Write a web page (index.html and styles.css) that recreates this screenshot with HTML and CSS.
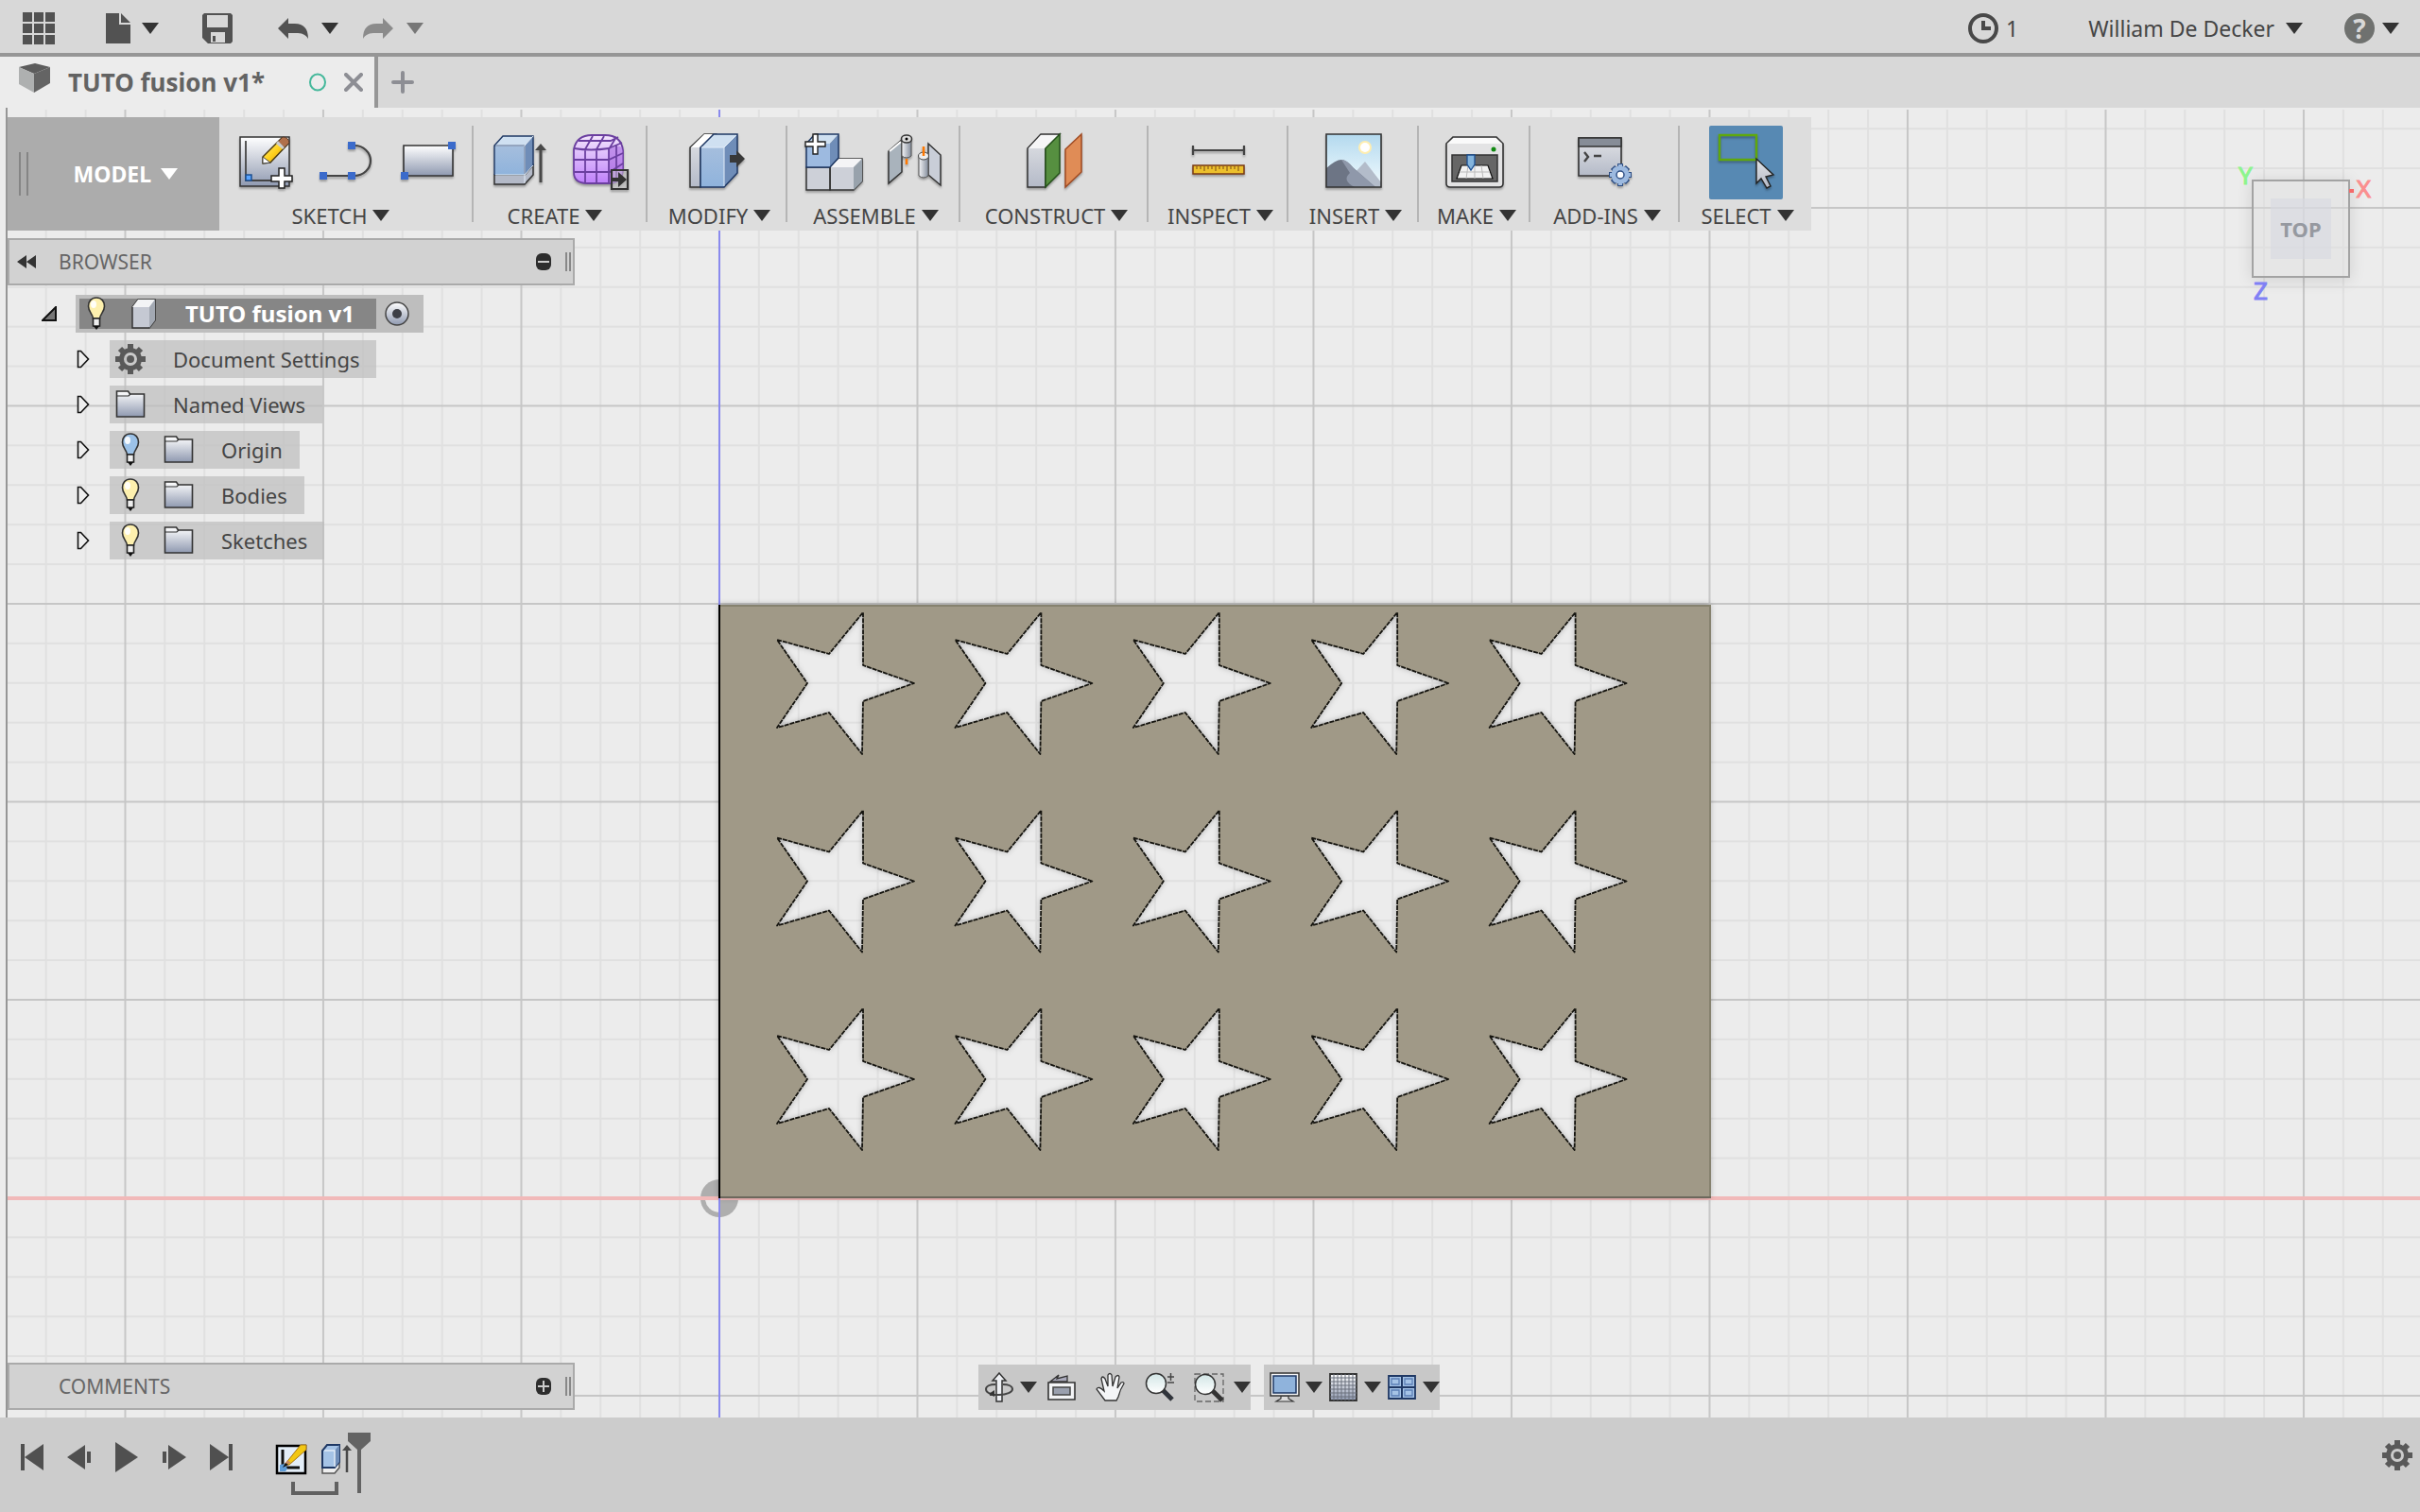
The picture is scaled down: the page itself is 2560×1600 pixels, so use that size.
FILE: index.html
```html
<!DOCTYPE html>
<html lang="en">
<head>
<meta charset="utf-8">
<title>TUTO fusion v1*</title>
<link rel="stylesheet" href="styles.css">
</head>
<body>
<svg class="defs" aria-hidden="true">
  <defs>
    <linearGradient id="steel" x1="0" y1="0" x2="0" y2="1"><stop offset="0" stop-color="#fff"/><stop offset="1" stop-color="#8f99b0"/></linearGradient>
    <linearGradient id="pale" x1="0" y1="0" x2="0" y2="1"><stop offset="0" stop-color="#e2e3e6"/><stop offset="1" stop-color="#b4bac8"/></linearGradient>
    <linearGradient id="pipe" x1="0" y1="0" x2="1" y2="0"><stop offset="0" stop-color="#f4f5f7"/><stop offset="1" stop-color="#848d9c"/></linearGradient>
    <linearGradient id="blue" x1="0" y1="0" x2="0" y2="1"><stop offset="0" stop-color="#a5bedd"/><stop offset="1" stop-color="#8fb3dc"/></linearGradient>
    <linearGradient id="purple" x1="0" y1="0" x2="0" y2="1"><stop offset="0" stop-color="#f3e6fc"/><stop offset="1" stop-color="#bf80fb"/></linearGradient>
    <linearGradient id="sky" x1="0" y1="0" x2="0" y2="1"><stop offset="0" stop-color="#b3d9ee"/><stop offset="1" stop-color="#f2fbff"/></linearGradient>
    <linearGradient id="glass" x1="0" y1="0" x2="0" y2="1"><stop offset="0" stop-color="#d2e6e6"/><stop offset="1" stop-color="#fff"/></linearGradient>
    <linearGradient id="pencil" x1="0" y1="0" x2="1" y2="1"><stop offset="0" stop-color="#fff2a0"/><stop offset=".5" stop-color="#ffd21e"/><stop offset="1" stop-color="#d98a00"/></linearGradient>
    <symbol id="gear" viewBox="0 0 32 32">
      <g stroke="#595959" fill="none">
        <circle cx="16" cy="16" r="9.500" stroke-width="5"/>
        <path stroke-width="6" d="M16 0v6M16 26v6M0 16h6M26 16h6M5 5l4 4M23 23l4 4M27 5l-4 4M9 23l-4 4"/>
      </g>
      <circle cx="16" cy="16" r="4" fill="#595959"/>
    </symbol>
    <symbol id="bulb" viewBox="0 0 20 36">
      <path d="M10 1C4.500 1 1.500 5 1.500 10c0 6 4.500 8 5 13h7c.5-5 5-7 5-13 0-5-3-9-8.500-9z" fill="currentColor" stroke="#333" stroke-width="1.600"/>
      <ellipse cx="7" cy="8" rx="3" ry="4" fill="#fff" opacity=".9"/>
      <path d="M6.500 23h7v8h-7z" fill="#eee" stroke="#222" stroke-width="1.600"/>
      <path d="M7 31h6l-3 4z" fill="#111"/>
    </symbol>
    <symbol id="folder" viewBox="0 0 32 32">
      <path d="M1.500 29V2h12l2 3h15v24z" fill="url(#steel)" stroke="#333" stroke-width="1.600"/>
      <path d="M2 7h12l2-2" fill="none" stroke="#333" stroke-width="1.200"/>
    </symbol>
    <symbol id="arrow-right" viewBox="0 0 14 20"><path d="M1.500 1.500v17h3l8-8.500-8-8.500z" fill="#eee" stroke="#111" stroke-width="1.600"/></symbol>
  </defs>
</svg>

<header class="topbar">
  <button class="tool-apps" aria-label="Data panel"><svg width="34" height="34"><path fill="#525252" d="M0 0h10v10H0zM12 0h10v10H12zM24 0h10v10H24zM0 12h10v10H0zM12 12h10v10H12zM24 12h10v10H24zM0 24h10v10H0zM12 24h10v10H12zM24 24h10v10H24z"/></svg></button>
  <button class="tool-file" aria-label="File"><svg width="26" height="32"><path fill="#525252" d="M0 0h14v12h12v20H0zM16 0l10 10H16z"/></svg><span class="caret"></span></button>
  <button class="tool-save" aria-label="Save"><svg width="32" height="32"><path fill="#525252" fill-rule="evenodd" d="M2 0h28l2 2v28l-2 2H6l-6-6V2zM5 2v13h22V2zM9 20v11h15V20zM11 24h3v6h-3z"/></svg></button>
  <button class="tool-undo" aria-label="Undo"><svg width="32" height="22"><path fill="#525252" d="M0 11L11 0v6h7c9 0 14 5 14 16-3-5-7-6-13-6h-8v6z"/></svg><span class="caret"></span></button>
  <button class="tool-redo" aria-label="Redo"><svg width="32" height="22"><path fill="#8b8b8b" d="M32 11L21 0v6h-7C5 6 0 11 0 22c3-5 7-6 13-6h8v6z"/></svg><span class="caret caret-dim"></span></button>
  <div class="account">
    <button class="jobs" aria-label="Job status"><svg width="32" height="32" fill="none" stroke="#484848"><circle cx="16" cy="16" r="14" stroke-width="4"/><path d="M16 8v8h8" stroke-width="4"/></svg><span>1</span></button>
    <button class="user">William De Decker<span class="caret"></span></button>
    <button class="help" aria-label="Help"><span class="help-mark">?</span><span class="caret"></span></button>
  </div>
</header>

<nav class="tabs">
  <div class="tab">
    <svg class="tab-cube" width="34" height="32"><path d="M0 4L17 0l16 4-17 7z" fill="#5c5c5c"/><path d="M0 4l16 7v20L0 22z" fill="#aeb0b0"/><path d="M33 4l-17 7v20l17-10z" fill="#646464"/></svg>
    <span class="tab-name">TUTO fusion v1*</span>
    <svg class="tab-state" width="18" height="20"><ellipse cx="9" cy="10" rx="8" ry="8.500" fill="none" stroke="#45b89b" stroke-width="2"/></svg>
    <button aria-label="Close tab"><svg width="20" height="20"><path d="M2 2l16 16M18 2L2 18" stroke="#8d8e94" stroke-width="4" stroke-linecap="round"/></svg></button>
  </div>
  <button class="tab-add" aria-label="New tab"><svg width="24" height="24"><path d="M12 2v20M2 12h20" stroke="#8d8e94" stroke-width="4" stroke-linecap="round"/></svg></button>
</nav>

<main class="viewport">
  <svg class="scene" aria-label="Plate with fifteen star cut-outs">
    <defs>
      <pattern id="grid" x="733" y="1131.500" width="209.500" height="209.500" patternUnits="userSpaceOnUse">
        <path d="M61.900 0v210M103.800 0v210M145.700 0v210M187.600 0v210M0 61.900h210M0 103.800h210M0 145.700h210M0 187.600h210" stroke="#e0e0e0" stroke-width="2"/>
        <path d="M20 0v210M0 20h210" stroke="#c6c6c6" stroke-width="2"/>
      </pattern>
      <path id="star" d="M959 607L905 588V532L869 576 814 561 846 607 814 654 869 638 904 682 905 626z"/>
      <g id="row"><use href="#star"/><use href="#star" x="188.400"/><use href="#star" x="376.800"/><use href="#star" x="565.200"/><use href="#star" x="753.600"/></g>
      <g id="stars"><use href="#row"/><use href="#row" y="209.500"/><use href="#row" y="419"/></g>
      <mask id="holes" maskUnits="userSpaceOnUse" x="740" y="500" width="1100" height="700"><rect x="740" y="500" width="1100" height="700" fill="#fff"/><use href="#stars" fill="#000"/></mask>
    </defs>
    <rect width="100%" height="100%" fill="url(#grid)"/>
    <circle cx="753" cy="1152" r="20" fill="#aeaeae"/>
    <path d="M753 1152v15a15 15 0 0 1-15-15z" fill="#ececec"/>
    <path d="M0 1152h8000" stroke="#f1b9b9" stroke-width="4"/>
    <path d="M753 0v8000" stroke="#8a8aee" stroke-width="2"/>
    <g class="plate"><rect x="753" y="524" width="1048" height="627" fill="#a09987" mask="url(#holes)"/></g>
    <use href="#stars" fill="none" stroke="#15140f" stroke-width="1.800" stroke-linejoin="round" stroke-dasharray="5 1"/>
    <path d="M753 525h1048" stroke="#86826f" stroke-width="2"/>
    <path d="M1801 524v627" stroke="#86826f" stroke-width="2"/>
    <path d="M753 1151h1049" stroke="#6c685c" stroke-width="2"/>
    <path d="M753 524v628" stroke="#000" stroke-width="2"/>
  </svg>

  <div class="ribbon">
    <button class="workspace"><span class="grip"></span>MODEL<span class="caret caret-light"></span></button>

    <section class="group g-sketch">
      <div class="tools">
        <button aria-label="Create sketch"><svg class="ico" viewBox="0 0 64 64">
          <path d="M5 5h52v52H5z" fill="url(#steel)" stroke="#333" stroke-width="1.500"/>
          <path d="M11 9v42h33" fill="none" stroke="#444" stroke-width="1.800"/>
          <path d="M11 45h6v6h-6z" fill="#59a4ff" stroke="#1d4f91" stroke-width="1.500"/>
          <path d="M29 26L49 6l7 6-19 20-8 1z" fill="url(#pencil)" stroke="#4a3a10" stroke-width="1.400"/>
          <path d="M45 10l5-5q6 0 7 6l-5 5z" fill="#b0704a" stroke="#5a3a28"/><path d="M43 12l7 6 2-2-7-7z" fill="#ccc"/>
          <path d="M29 26v7l8-1z" fill="#fff" stroke="#444"/>
          <path d="M46 38h6v8h8v6h-8v7h-6v-7h-8v-6h8z" fill="#fff" stroke="#222" stroke-width="1.500"/>
        </svg></button>
        <button aria-label="Line"><svg class="ico" viewBox="0 0 64 64">
          <path d="M6 46h34a17 16 0 0 0 0-32h-4" fill="none" stroke="#444" stroke-width="2.200"/>
          <path d="M3 42h8v8H3zM33 42h8v8h-8zM33 10h8v8h-8z" fill="#3b6bcb"/>
        </svg></button>
        <button aria-label="Rectangle"><svg class="ico" viewBox="0 0 64 64">
          <path d="M6 14h52v32H6z" fill="url(#steel)" stroke="#333" stroke-width="1.600"/>
          <path d="M3 42h8v8H3zM53 10h8v8h-8z" fill="#3b6bcb"/>
        </svg></button>
      </div>
      <button class="menu">SKETCH<span class="caret"></span></button>
    </section>

    <section class="group g-create">
      <div class="tools">
        <button aria-label="Extrude"><svg class="ico" viewBox="0 0 64 64">
          <path d="M5 45h32l9-10v10l-9 10H5z" fill="#b4bac8" stroke="#333" stroke-width="1.500"/>
          <path d="M5 14l9-10h32l-9 10z" fill="#cfe0f1"/><path d="M5 14h32v31H5z" fill="url(#blue)"/><path d="M37 14l9-10v31l-9 10z" fill="#6f8db8"/>
          <path d="M5 45V14L14 4h32v31M5 14h32v31" fill="none" stroke="#1f3864" stroke-width="1.400"/><path d="M6 45h31l9-10M37 14l9-10M6 14h31v40" fill="none" stroke="#e3edf8"/>
          <path d="M54 53V17" stroke="#484848" stroke-width="3"/><path d="M54 12l6 7H48z" fill="#484848"/>
        </svg></button>
        <button aria-label="Create form"><svg class="ico" viewBox="0 0 64 64">
          <path d="M3 18Q6 3 22 3h14q17 0 19 16v20q0 14-14 15H17Q3 54 3 42z" fill="url(#purple)" stroke="#6b3fa0" stroke-width="1.800"/>
          <path d="M40 18q14-8 15 2v18q0 14-14 16z" fill="#a86ae0" opacity=".6"/>
          <path d="M3 17q18 3 37 0l14-6M3 29h37l15-7M3 42h38l14-9M8 9h34l8-4M15 54V18l8-14M27 54V18l8-14M40 54V18l8-13M48 51V14" fill="none" stroke="#6b3fa0" stroke-width="1.800"/>
          <path d="M43 40h17v20H43z" fill="#ccc" fill-opacity=".5" stroke="#333" stroke-width="2.200"/><path d="M43 48h7v-6l9 8-9 8v-6h-7z" fill="#333"/>
        </svg></button>
      </div>
      <button class="menu">CREATE<span class="caret"></span></button>
    </section>

    <section class="group g-modify">
      <div class="tools">
        <button aria-label="Press pull"><svg class="ico" viewBox="0 0 64 64">
          <path d="M3 16L18 2h12L14 16v42H3z" fill="url(#pale)" stroke="#333" stroke-width="1.500"/><path d="M4 16L18 2h9L14 16z" fill="#fff"/>
          <path d="M14 16L28 2h25L39 16z" fill="#cfe0f1"/><path d="M14 16h25v42H14z" fill="url(#blue)"/><path d="M39 16L53 2v41L39 58z" fill="#6f8db8"/>
          <path d="M14 16L28 2h25v41L39 58H14z" fill="none" stroke="#1f3864" stroke-width="1.500"/><path d="M15 16h24v41M39 16L52 3" fill="none" stroke="#e3edf8"/>
          <path d="M45 24h7v-5l9 9-9 9v-5h-7z" fill="#383838"/>
        </svg></button>
      </div>
      <button class="menu">MODIFY<span class="caret"></span></button>
    </section>

    <section class="group g-assemble">
      <div class="tools">
        <button aria-label="New component"><svg class="ico" viewBox="0 0 64 64">
          <path d="M28 37l9-9h25v24l-9 9H28z" fill="#cdd0d8" stroke="#333" stroke-width="1.500"/><path d="M28 37l9-9h25l-9 9z" fill="#f4f4f6"/><path d="M53 37l9-9v24l-9 9z" fill="#98a2ac"/>
          <path d="M3 37h25v24H3z" fill="#cdd0d8" stroke="#333" stroke-width="1.500"/>
          <path d="M3 12l9-10h25l-9 10z" fill="#cfe0f1"/><path d="M3 12h25v25H3z" fill="#9dbae0"/><path d="M28 12l9-10v25l-9 10z" fill="#6f8db8"/><path d="M3 37V12l9-10h25v25l-9 10z" fill="none" stroke="#1f3864" stroke-width="1.500"/>
          <path d="M28 37v24" fill="none" stroke="#333"/>
          <path d="M10 2h5v8h8v5h-8v8h-5v-8H2v-5h8z" fill="#fff" stroke="#222" stroke-width="1.400"/>
        </svg></button>
        <button aria-label="Joint"><svg class="ico" viewBox="0 0 64 64">
          <path d="M4 20L18 8v34L4 54z" fill="#a9b3bc" stroke="#333" stroke-width="1.500"/><path d="M5 20L17 10" stroke="#fff" stroke-width="2"/>
          <path d="M18 7v18q5 4 10 0V7z" fill="url(#pipe)" stroke="#555"/><ellipse cx="23" cy="7" rx="5.500" ry="4" fill="#ddd" stroke="#333" stroke-width="1.500"/><circle cx="23" cy="7" r="1.500"/>
          <path d="M23 28v6" stroke="#ff7800" stroke-width="2.500"/>
          <path d="M46 12l13 12v32L46 45z" fill="#c9ced8" stroke="#333" stroke-width="1.500"/>
          <path d="M36 26v20q5 4 10 0V26z" fill="url(#pipe)" stroke="#555"/><ellipse cx="41" cy="25" rx="5.500" ry="4" fill="#eee" stroke="#444"/>
          <path d="M41 15v10" stroke="#ff7800" stroke-width="2.500"/>
        </svg></button>
      </div>
      <button class="menu">ASSEMBLE<span class="caret"></span></button>
    </section>

    <section class="group g-construct">
      <div class="tools">
        <button aria-label="Offset plane"><svg class="ico" viewBox="0 0 64 64">
          <path d="M3 17L17 2h20L22 17v41H3z" fill="url(#pale)" stroke="#333" stroke-width="1.500"/><path d="M4 17L17 3h19L22 17z" fill="#f6f6f7"/>
          <path d="M22 17L37 2v41L22 58z" fill="#568f40" stroke="#24501a" stroke-width="1.500"/>
          <path d="M43 18L60 2v40L43 58z" fill="#e08c56" stroke="#a04a22" stroke-width="1.500"/>
        </svg></button>
      </div>
      <button class="menu">CONSTRUCT<span class="caret"></span></button>
    </section>

    <section class="group g-inspect">
      <div class="tools">
        <button aria-label="Measure"><svg class="ico" viewBox="0 0 64 64">
          <path d="M5 19h54M5 14v10M59 14v10" stroke="#444" stroke-width="2.200"/>
          <path d="M5 35h54v9H5z" fill="#edc02c" stroke="#7a3a14" stroke-width="1.500"/>
          <path d="M9 36v3M13 36v3M17 36v5M21 36v3M25 36v3M29 36v5M33 36v3M37 36v3M41 36v5M45 36v3M49 36v3M53 36v5" stroke="#7a4a14" stroke-width="1"/>
        </svg></button>
      </div>
      <button class="menu">INSPECT<span class="caret"></span></button>
    </section>

    <section class="group g-insert">
      <div class="tools">
        <button aria-label="Insert image"><svg class="ico" viewBox="0 0 64 64">
          <path d="M3 2h58v56H3z" fill="url(#sky)"/>
          <circle cx="44" cy="16" r="7" fill="#ffeeb0"/><circle cx="44" cy="16" r="5" fill="#fff"/>
          <path d="M32 44l12-13 17 22v5H34z" fill="#b3bcca"/><path d="M3 38q10-9 16-9 5 0 13 9l23 20H3z" fill="#6d7585"/><path d="M19 29q6 0 12 8l24 21H33q-14-7-5-15z" fill="#8f98aa"/>
          <path d="M3 2h58v56H3z" fill="none" stroke="#333" stroke-width="1.600"/>
        </svg></button>
      </div>
      <button class="menu">INSERT<span class="caret"></span></button>
    </section>

    <section class="group g-make">
      <div class="tools">
        <button aria-label="3D print"><svg class="ico" viewBox="0 0 64 64">
          <path d="M2 12l7-7h46l7 7v42q0 4-4 4H6q-4 0-4-4z" fill="#e3e3e4" stroke="#333" stroke-width="1.600"/><path d="M3 12l7-6h44l7 6z" fill="#fafafa"/>
          <ellipse cx="52" cy="18" rx="2.500" ry="2.500" fill="#128a12"/>
          <path d="M8 24h48v28H8z" fill="#666" stroke="#333" stroke-width="1.500"/><path d="M18 35h28l5 14H13z" fill="#f2f2f2" stroke="#111" stroke-width="1.200"/><path d="M16 42h32M25 35l-2 14M32 35v14M39 35l2 14" stroke="#bbb"/>
          <path d="M24 24h8v10l-4 6-4-6z" fill="#84b4dc" stroke="#1d4f91" stroke-width="1.300"/>
        </svg></button>
      </div>
      <button class="menu">MAKE<span class="caret"></span></button>
    </section>

    <section class="group g-addins">
      <div class="tools">
        <button aria-label="Scripts and add-ins"><svg class="ico" viewBox="0 0 64 64">
          <path d="M4 6h45v40H4z" fill="url(#pale)" stroke="#333" stroke-width="1.600"/><path d="M4 6h45v9H4z" fill="#878d97" stroke="#333" stroke-width="1.600"/>
          <path d="M10 21l4 5-4 5M20 25h8" fill="none" stroke="#444" stroke-width="2.400"/>
          <g stroke="#2f4f84" fill="none"><path stroke-width="6" d="M48 33v24M36 45h24M40 37l16 16M56 37L40 53"/><circle cx="48" cy="45" r="9.500" fill="#9dbae0" stroke="none"/><path stroke="#9dbae0" stroke-width="4" d="M48 34v22M37 45h22M41 38l14 14M55 38L41 52"/><circle cx="48" cy="45" r="4" fill="#fff" stroke-width="1.500"/></g>
        </svg></button>
      </div>
      <button class="menu">ADD-INS<span class="caret"></span></button>
    </section>

    <section class="group g-select">
      <div class="tools">
        <button class="active" aria-label="Select"><svg class="ico" viewBox="0 0 64 64">
          <path d="M4 3h39v26H4z" fill="none" stroke="#5fa80c" stroke-width="2.500"/>
          <path d="M43 28v26l5-5 6 10 4-2-5-10 8-2z" fill="url(#pale)" stroke="#222" stroke-width="1.400"/>
        </svg></button>
      </div>
      <button class="menu">SELECT<span class="caret"></span></button>
    </section>
  </div>

  <aside class="browser">
    <header class="panel">
      <button aria-label="Collapse"><svg width="20" height="14"><path d="M0 7l10-7v14zM10 7l10-7v14z" fill="#333"/></svg></button>
      <h2>BROWSER</h2>
      <button aria-label="Minimise"><svg width="18" height="18"><rect x="1" y="0" width="16" height="18" rx="6" fill="#2d2d2d"/><path d="M3 9h12" stroke="#ccc" stroke-width="2"/></svg></button>
      <span class="panel-grip"></span>
    </header>
    <ul class="tree">
      <li class="root">
        <button aria-label="Collapse TUTO fusion v1"><svg width="16" height="16"><path d="M1 15L15 1v14z" fill="#777" stroke="#111" stroke-width="2"/></svg></button>
        <div class="chip">
          <span class="doc"><svg class="bulb on"><use href="#bulb"/></svg><svg width="26" height="32"><path d="M1 9l6-8h18v22l-6 8H1z" fill="#c5c9d3" stroke="#333" stroke-width="1.500"/><path d="M1 9l6-8h18l-6 8z" fill="#f3f4f6"/><path d="M19 9l6-8v22l-6 8z" fill="#a3a9b3"/></svg><b>TUTO fusion v1</b></span>
          <svg width="26" height="26"><circle cx="13" cy="13" r="12" fill="url(#steel)" stroke="#444" stroke-width="1.500"/><circle cx="13" cy="13" r="5" fill="#3d3f46"/></svg>
        </div>
      </li>
      <li><button aria-label="Expand Document Settings"><svg width="14" height="20"><use href="#arrow-right"/></svg></button><div class="chip"><svg class="node"><use href="#gear"/></svg><span>Document Settings</span></div></li>
      <li><button aria-label="Expand Named Views"><svg width="14" height="20"><use href="#arrow-right"/></svg></button><div class="chip"><svg class="node"><use href="#folder"/></svg><span>Named Views</span></div></li>
      <li><button aria-label="Expand Origin"><svg width="14" height="20"><use href="#arrow-right"/></svg></button><div class="chip"><svg class="bulb off"><use href="#bulb"/></svg><svg class="node"><use href="#folder"/></svg><span>Origin</span></div></li>
      <li><button aria-label="Expand Bodies"><svg width="14" height="20"><use href="#arrow-right"/></svg></button><div class="chip"><svg class="bulb on"><use href="#bulb"/></svg><svg class="node"><use href="#folder"/></svg><span>Bodies</span></div></li>
      <li><button aria-label="Expand Sketches"><svg width="14" height="20"><use href="#arrow-right"/></svg></button><div class="chip"><svg class="bulb on"><use href="#bulb"/></svg><svg class="node"><use href="#folder"/></svg><span>Sketches</span></div></li>
    </ul>
  </aside>

  <div class="viewcube">
    <button class="face">TOP</button>
    <span class="axis axis-y">Y</span><span class="axis axis-x">X</span><span class="axis axis-z">Z</span>
  </div>

  <div class="bottom">
    <section class="panel comments">
      <h2>COMMENTS</h2>
      <button aria-label="Add comment"><svg width="18" height="18"><rect x="1" y="0" width="16" height="18" rx="6" fill="#2d2d2d"/><path d="M3 9h12M9 3v12" stroke="#ccc" stroke-width="2"/></svg></button>
      <span class="panel-grip"></span>
    </section>
    <div class="navbars">
      <div class="navbar nav-view">
        <button class="slim" aria-label="Orbit"><svg width="32" height="32"><path d="M13 31V9H9l7-8 7 8h-4v22z" fill="#eef0f4" stroke="#333" stroke-width="1.500"/><path d="M20 13c6 0 10 2 10 5s-6 6-14 6H6M12 13c-6 0-10 2-10 5 0 2 2 4 5 5" fill="none" stroke="#444" stroke-width="2"/><path d="M5 23l6-4v7z" fill="#333"/></svg></button>
        <button class="drop" aria-label="Orbit options"><span class="caret"></span></button>
        <button aria-label="Look at"><svg width="32" height="32"><path d="M4 10l9-7-2 4 11-3v6z" fill="#aab" stroke="#333" stroke-width="1.300"/><path d="M2 11h28v18H2z" fill="#f3f4f6" stroke="#333" stroke-width="1.600"/><path d="M7 16h18v8H7z" fill="#9aa0ae" stroke="#444" stroke-width="1.500"/></svg></button>
        <button aria-label="Pan"><svg width="32" height="32"><path d="M10 30C7 26 4 22 1 18q2-4 8 2L6 7q1-4 4 0l3 8V3q2-3 4 0l1 12 3-10q3-3 4 0l-2 12 4-6q3-1 3 1-4 6-6 14l-2 4z" fill="#f4f5f7" stroke="#333" stroke-width="1.300"/></svg></button>
        <button aria-label="Zoom"><svg width="32" height="32"><path d="M19 19l10 10" stroke="#30343b" stroke-width="5"/><circle cx="12" cy="12" r="10.500" fill="url(#glass)" stroke="#333" stroke-width="1.500"/><path d="M24 5h7M27.500 1v8M24 11h7" stroke="#444" stroke-width="1.500"/></svg></button>
        <button aria-label="Fit"><svg width="32" height="32"><path d="M1 2h30v29H1z" fill="none" stroke="#666" stroke-width="1.300" stroke-dasharray="6 3"/><path d="M20 20l10 10" stroke="#333" stroke-width="5"/><circle cx="12" cy="13" r="10.500" fill="url(#glass)" stroke="#333" stroke-width="1.500"/></svg></button>
        <button class="drop" aria-label="Zoom options"><span class="caret"></span></button>
      </div>
      <div class="navbar nav-display">
        <button class="slim" aria-label="Display settings"><svg width="32" height="32"><path d="M12 25h8v3l5 3H7l5-3z" fill="#ddd" stroke="#333" stroke-width="1.200"/><path d="M1 1h30v24H1z" fill="#f3f4f6" stroke="#333" stroke-width="1.500"/><path d="M4 4h24v18H4z" fill="#8fb3dc" stroke="#1f3864" stroke-width="1.500"/></svg></button>
        <button class="drop" aria-label="Display options"><span class="caret"></span></button>
        <button class="slim" aria-label="Grid and snaps"><svg width="32" height="32"><path d="M2 2h28v28H2z" fill="url(#steel)" stroke="#333" stroke-width="1.800"/><path d="M6 2v28M10 2v28M14 2v28M18 2v28M22 2v28M26 2v28M2 6h28M2 10h28M2 14h28M2 18h28M2 22h28M2 26h28" stroke="#6a707d" stroke-width="1"/></svg></button>
        <button class="drop" aria-label="Grid options"><span class="caret"></span></button>
        <button class="slim" aria-label="Viewports"><svg width="32" height="32"><path d="M2 4h28v24H2z" fill="#a5c3e6" stroke="#1f3864" stroke-width="1.800"/><path d="M16 4v24M2 16h28" stroke="#1f3864" stroke-width="2"/><path d="M5 7h8v6H5zM19 7h8v6h-8zM5 19h8v6H5zM19 19h8v6h-8z" fill="none" stroke="#5b7fb5" stroke-width="1.300"/></svg></button>
        <button class="drop" aria-label="Viewport options"><span class="caret"></span></button>
      </div>
    </div>
  </div>
</main>

<footer class="timeline">
  <div class="playback">
    <button aria-label="Go to start"><svg width="26" height="34"><path d="M1 3h4v28H1zM5 17L25 3v28z" fill="#505050"/></svg></button>
    <button aria-label="Step back"><svg width="26" height="34"><path d="M0 17L19 4v26zM21 11h4v12h-4z" fill="#505050"/></svg></button>
    <button aria-label="Play"><svg width="26" height="34"><path d="M1 1l24 16L1 33z" fill="#505050"/></svg></button>
    <button aria-label="Step forward"><svg width="26" height="34"><path d="M26 17L7 4v26zM1 11h4v12H1z" fill="#505050"/></svg></button>
    <button aria-label="Go to end"><svg width="26" height="34"><path d="M21 3h4v28h-4zM21 17L1 3v28z" fill="#505050"/></svg></button>
  </div>
  <div class="features">
    <button aria-label="Sketch1"><svg width="34" height="34"><path d="M2 3h30v29H2z" fill="#e4eef8" stroke="#000" stroke-width="2.500"/><path d="M8 7v19h18" fill="none" stroke="#111" stroke-width="3"/><path d="M5 30v-7l5-1 3 5-2 3z" fill="#5d9bd6"/><path d="M10 23L27 2h6v5L15 23z" fill="#f2c713" stroke="#a87410"/><path d="M10 23l3-5 4 3z" fill="#c98a60"/><path d="M8 26l3-5 3 2z" fill="#111"/></svg></button>
    <button aria-label="Extrude1"><svg width="34" height="34"><path d="M2 25h13l5-6v7l-5 6H2z" fill="#eee" stroke="#555" stroke-width="1.500"/><path d="M2 26V8l5-6h13v18l-5 6z" fill="#a5c3e6" stroke="#1f3864" stroke-width="2"/><path d="M15 8l5-6v18l-5 6z" fill="#6f8db8"/><path d="M4 8h11v17" fill="none" stroke="#e3edf8" stroke-width="1.500"/><path d="M28 31V5" stroke="#484848" stroke-width="2.500"/><path d="M28 2l5 6H23z" fill="#484848"/></svg></button>
    <svg class="span" width="50" height="14"><path d="M2 0v12h46V0" fill="none" stroke="#606060" stroke-width="4"/></svg>
    <svg class="marker" width="24" height="64"><path d="M0 0h24v9l-10 9v46h-4V18L0 9z" fill="#636363"/></svg>
  </div>
  <button class="settings" aria-label="Timeline settings"><svg width="32" height="32"><use href="#gear"/></svg></button>
</footer>
</body>
</html>
```
FILE: styles.css
```css
* { box-sizing: border-box; }

body {
  margin: 0;
  min-height: 100vh;
  display: flex;
  flex-direction: column;
  background: #ececec;
  color: #454545;
  font: 22px/30px "Noto Sans", sans-serif;
}

button {
  display: flex;
  align-items: center;
  justify-content: center;
  flex: none;
  margin: 0;
  padding: 0;
  border: 0;
  background: none;
  color: inherit;
  font: inherit;
  white-space: nowrap;
}

svg { display: block; flex: none; }
h2 { margin: 0; font-size: 21px; font-weight: 400; }
.defs { position: absolute; width: 0; height: 0; }

.caret {
  flex: none;
  border: solid transparent;
  border-width: 12px 9px 0;
  border-top-color: #333;
}
.caret-dim { border-top-color: #777; }
.caret-light { border-top-color: #fff; }

/* Application bar */
.topbar {
  display: flex;
  align-items: center;
  height: 60px;
  padding: 0 22px 0 24px;
  background: #d8d8d8;
  border-bottom: 4px solid #969696;
}
.topbar button { gap: 12px; height: 56px; padding-top: 4px; }
.tool-file { margin-left: 54px; }
.tool-save { margin-left: 46px; }
.tool-undo { margin-left: 48px; }
.tool-redo { margin-left: 26px; }
.topbar .tool-undo, .topbar .tool-redo { gap: 14px; }
.account { display: flex; margin-left: auto; }
.topbar .jobs { gap: 8px; margin-right: 74px; font-size: 23px; }
.topbar .user { margin-right: 44px; font-size: 23px; }
.topbar .help { gap: 8px; }
.help-mark {
  width: 32px;
  height: 32px;
  border-radius: 50%;
  background: #6f716f;
  color: #d8d8d8;
  font-size: 28px;
  font-weight: 700;
  line-height: 32px;
}

/* Document tabs */
.tabs {
  display: flex;
  height: 54px;
  background: #d8d8d8;
}
.tab {
  display: flex;
  align-items: center;
  width: 400px;
  padding: 0 12px 0 20px;
  background: #ececec;
  border-right: 4px solid #969696;
}
.tab-cube { margin-bottom: 8px; }
.tab-name {
  margin-left: 18px;
  color: #636363;
  font-size: 26px;
  font-weight: 700;
  white-space: nowrap;
}
.tab-state { margin: 0 19px 0 auto; }
.tab-add { width: 52px; }

/* Drawing area */
.viewport {
  position: relative;
  flex: 1;
  display: flex;
  flex-direction: column;
  align-items: flex-start;
  padding-top: 10px;
  border-left: 2px solid #969696;
  margin-left: 6px;
}
.scene {
  position: absolute;
  top: 2px;
  left: 0;
  width: 100%;
  height: calc(100% - 2px);
}
.plate { filter: drop-shadow(0 0 3px rgba(0, 0, 0, .3)); }

/* Ribbon */
.ribbon {
  position: relative;
  display: flex;
  height: 120px;
  background: #ddd;
}
.workspace {
  width: 224px;
  gap: 10px;
  padding-right: 44px;
  background: #acacac;
  color: #fff;
}
.ribbon .workspace { font-size: 23px; font-weight: 700; }
.grip {
  width: 10px;
  height: 46px;
  margin: 0 auto 0 12px;
  border: solid #858585;
  border-width: 0 2px;
}
.group {
  display: flex;
  flex-direction: column;
  align-items: center;
  padding-top: 9px;
  background: linear-gradient(#b5b5b5, #b5b5b5) no-repeat right 9px / 2px 102px;
}
.group:last-child { background: none; }
.tools { display: flex; gap: 8px; }
.tools button { width: 78px; height: 78px; padding-bottom: 1px; }
.tools .active { background: #5789b3; border-radius: 2px; }
.ico {
  width: 64px;
  height: 64px;
  overflow: visible;
  filter: drop-shadow(0 2px 1px rgba(0, 0, 0, .3));
}
.menu { gap: 6px; height: 33px; padding-left: 4px; }
.g-sketch .menu, .g-create .menu { padding: 0 12px 0 0; }
.g-sketch { width: 269px; }
.g-create { width: 184px; }
.g-modify { width: 148px; }
.g-assemble { width: 183px; }
.g-construct { width: 199px; }
.g-inspect { width: 148px; }
.g-insert { width: 138px; }
.g-make { width: 118px; }
.g-addins { width: 158px; }
.g-select { width: 139px; }

/* Side panels */
.panel {
  display: flex;
  align-items: center;
  width: 600px;
  height: 50px;
  padding: 0 2px 0 8px;
  background: #d2d2d2;
  border: 2px solid #aaa;
  color: #666;
}
.panel h2 { margin: 0 auto 0 24px; }
.comments h2 { margin-left: 44px; }
.panel-grip {
  width: 6px;
  height: 20px;
  margin-left: 14px;
  border: solid #888;
  border-width: 0 2px;
}
.browser { position: relative; margin-top: 8px; }

.tree {
  display: flex;
  flex-direction: column;
  gap: 8px;
  margin: 10px 0 0;
  padding: 0;
  list-style: none;
}
.tree li {
  display: flex;
  align-items: center;
  gap: 21px;
  padding-left: 73px;
}
.tree .root { gap: 20px; padding-left: 36px; }
.chip {
  display: flex;
  align-items: center;
  height: 40px;
  gap: 29px;
  padding: 0 18px 0 6px;
  background: rgba(190, 190, 190, .7);
}
.root .chip { gap: 9px; padding: 0 15px 0 4px; background: #bebebe; }
.doc {
  display: flex;
  align-items: center;
  width: 314px;
  height: 32px;
  padding-left: 8px;
  background: #868686;
  color: #fff;
  font-size: 24px;
}
.doc svg + svg { margin-left: 27px; }
.doc b { margin-left: 31px; white-space: nowrap; }
.node { width: 32px; height: 32px; }
.bulb { width: 20px; height: 36px; }
.chip > .bulb { margin: 0 -4px 0 6px; }
.on { color: #fdf0ae; }
.off { color: #9cc2e8; }

/* View cube */
.viewcube {
  position: absolute;
  top: 76px;
  right: 74px;
  width: 104px;
  height: 104px;
  padding: 18px;
  border: 2px solid #a3a3a3;
  background: rgba(225, 225, 225, .45);
  box-shadow: 0 2px 16px rgba(0, 0, 0, .12);
}
.face {
  width: 64px;
  height: 64px;
  background: rgba(215, 217, 225, .6);
  color: #9699a0;
  font-weight: 700;
}
.axis {
  position: absolute;
  font: 26px/26px "Noto Sans", sans-serif;
  -webkit-text-stroke: 1px currentColor;
}
.axis-y { top: -20px; left: -16px; color: #8df58d; }
.axis-x { top: -6px; right: -24px; color: #fa8f8f; }
.axis-z { top: 102px; left: 0; color: #8080f5; }
.axis-x::before {
  content: "";
  position: absolute;
  top: 14px;
  right: 18px;
  width: 5px;
  height: 4px;
  background: #f56a6a;
}

/* Bottom overlay row */
.bottom {
  position: relative;
  display: grid;
  grid-template-columns: 1fr auto 1fr;
  align-items: end;
  align-self: stretch;
  margin-top: auto;
  padding: 0 10px 8px 0;
}
.navbars { display: flex; gap: 14px; }
.navbar {
  display: flex;
  height: 48px;
  background: #c8c8c8;
}
.navbar button { width: 52px; }
.navbar .slim { width: 44px; }
.navbar .drop { width: 18px; }

/* Timeline */
.timeline {
  display: flex;
  height: 100px;
  padding: 0 8px 0 21px;
  background: #ccc;
}
.playback { display: flex; gap: 24px; height: 84px; }
.features {
  position: relative;
  display: flex;
  gap: 14px;
  height: 84px;
  margin: 2px 0 0 44px;
}
.span { position: absolute; top: 66px; left: 17px; }
.marker { position: absolute; top: 14px; left: 77px; }
.settings { height: 80px; margin-left: auto; }
```
